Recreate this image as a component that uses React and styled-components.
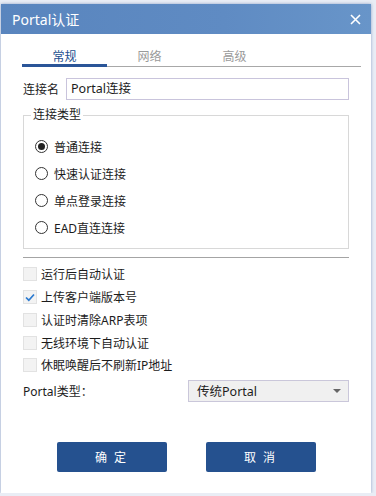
import styled, { createGlobalStyle } from 'styled-components';

const Global = createGlobalStyle`
  html, body {
    margin: 0;
    padding: 0;
    background: #e9edf5;
  }
  body {
    font-family: "Noto Sans", "Noto Sans CJK SC", sans-serif;
    font-size: 12px;
    color: #1c1c1c;
  }
  #root {
    padding: 4px 0 0 1px;
  }
`;

const Dialog = styled.div`
  width: 370px;
  height: 489px;
  background: #fff;
  box-shadow: 0 0 3px rgba(70, 100, 160, 0.55);
  display: flex;
  flex-direction: column;
`;

const TitleBar = styled.div`
  height: 30px;
  flex: none;
  display: flex;
  align-items: center;
  justify-content: space-between;
  padding: 0 8px 0 11px;
  background: linear-gradient(90deg, #5985be 0%, #5f8bc3 60%, #6895c9 100%);
  color: #fff;
  font-size: 14px;
`;

const CloseBtn = styled.button`
  border: 0;
  background: none;
  padding: 0;
  width: 16px;
  height: 16px;
  display: flex;
  align-items: center;
  justify-content: center;
  cursor: pointer;
`;

const Body = styled.div`
  flex: 1;
  display: flex;
  flex-direction: column;
  padding: 0 22px 0 22px;
`;

const Tabs = styled.div`
  display: flex;
  margin: 14px -12px 0 -1px;
  border-bottom: 1px solid #a8a8a8;
`;

const Tab = styled.div`
  position: relative;
  width: 85px;
  height: 18px;
  line-height: 18px;
  text-align: center;
  color: ${p => (p.$active ? '#24508f' : '#9a9a9a')};
  &::after {
    content: '';
    display: ${p => (p.$active ? 'block' : 'none')};
    position: absolute;
    left: 0;
    right: 0;
    bottom: -1px;
    height: 3px;
    background: #2a5598;
  }
`;

const NameRow = styled.div`
  display: flex;
  align-items: center;
  margin-top: 11px;
  gap: 7px;
`;

const Input = styled.div`
  flex: 1;
  height: 20px;
  line-height: 20px;
  border: 1px solid #c9c4dc;
  padding: 0 4px;
  font-size: 12.5px;
`;

const Group = styled.fieldset`
  margin: 7px 0 0 0;
  padding: 10px 0 7px 11px;
  border: 1px solid #d8d8d8;
  min-width: 0;
`;

const Legend = styled.legend`
  padding: 0 2px;
  margin-left: -4px;
  line-height: 16px;
  font-size: 12px;
`;

const RadioRow = styled.div`
  height: 27px;
  display: flex;
  align-items: center;
  gap: 6px;
`;

const RadioDot = styled.span`
  width: 11px;
  height: 11px;
  border: 1px solid #333;
  border-radius: 50%;
  display: flex;
  align-items: center;
  justify-content: center;
  &::before {
    content: '';
    display: ${p => (p.$on ? 'block' : 'none')};
    width: 7px;
    height: 7px;
    border-radius: 50%;
    background: #222;
  }
`;

const Divider = styled.div`
  height: 1px;
  background: #a4a4a4;
  margin: 8px 0 5px;
`;

const CheckRow = styled.div`
  height: 22.75px;
  display: flex;
  align-items: center;
  gap: 4px;
`;

const Box = styled.span`
  width: 12px;
  height: 12px;
  border: 1px solid #e2e2e2;
  background: #f3f3f3;
  display: flex;
  align-items: center;
  justify-content: center;
`;

const TypeRow = styled.div`
  display: flex;
  align-items: center;
  justify-content: space-between;
  margin-top: 3px;
`;

const Select = styled.div`
  width: 144px;
  height: 20px;
  border: 1px solid #cac7da;
  background: #f0f0f0;
  display: flex;
  align-items: center;
  justify-content: space-between;
  padding: 0 7px 0 8px;
  font-size: 12.5px;
`;

const Arrow = styled.span`
  width: 0;
  height: 0;
  border-left: 4px solid transparent;
  border-right: 4px solid transparent;
  border-top: 4px solid #666;
`;

const Buttons = styled.div`
  display: flex;
  justify-content: center;
  gap: 39px;
  margin-top: 40px;
`;

const Button = styled.button`
  width: 110px;
  height: 30px;
  border: 0;
  border-radius: 2px;
  background: #25518f;
  color: #fff;
  font-family: inherit;
  font-size: 12px;
  letter-spacing: 2px;
  white-space: pre;
  cursor: pointer;
`;

const radios = ['普通连接', '快速认证连接', '单点登录连接', 'EAD直连连接'];
const checks = [
  ['运行后自动认证', false],
  ['上传客户端版本号', true],
  ['认证时清除ARP表项', false],
  ['无线环境下自动认证', false],
  ['休眠唤醒后不刷新IP地址', false],
];

export default function App() {
  return (
    <>
      <Global />
      <Dialog>
        <TitleBar>
          <span>Portal认证</span>
          <CloseBtn>
            <svg width="11" height="11" viewBox="0 0 11 11">
              <path d="M1 1L10 10M10 1L1 10" stroke="#fff" strokeWidth="1.6" />
            </svg>
          </CloseBtn>
        </TitleBar>
        <Body>
          <Tabs>
            <Tab $active>常规</Tab>
            <Tab>网络</Tab>
            <Tab>高级</Tab>
          </Tabs>
          <NameRow>
            <span>连接名</span>
            <Input>Portal连接</Input>
          </NameRow>
          <Group>
            <Legend>连接类型</Legend>
            {radios.map((r, i) => (
              <RadioRow key={r}>
                <RadioDot $on={i === 0} />
                <span>{r}</span>
              </RadioRow>
            ))}
          </Group>
          <Divider />
          {checks.map(([label, on]) => (
            <CheckRow key={label}>
              <Box>
                {on && (
                  <svg width="10" height="9" viewBox="0 0 10 9">
                    <path d="M1 4.5L3.8 7.2L9 1.5" fill="none" stroke="#2b7ad0" strokeWidth="1.7" />
                  </svg>
                )}
              </Box>
              <span>{label}</span>
            </CheckRow>
          ))}
          <TypeRow>
            <span>Portal类型：</span>
            <Select>
              <span>传统Portal</span>
              <Arrow />
            </Select>
          </TypeRow>
          <Buttons>
            <Button>确 定</Button>
            <Button>取 消</Button>
          </Buttons>
        </Body>
      </Dialog>
    </>
  );
}
